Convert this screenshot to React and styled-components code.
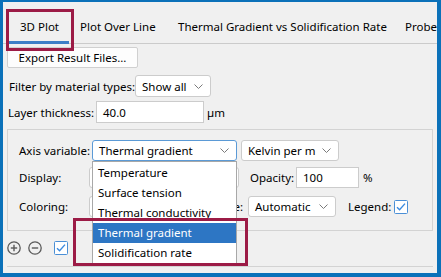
import React from "react";
import styled, { createGlobalStyle } from "styled-components";

const BLUE_FRAME = "#0b71b9";
const ACCENT = "#3c7ec6";
const MARK = "#9c1b46";

const GlobalStyle = createGlobalStyle`
    html, body {
        margin: 0;
        padding: 0;
        background: #f0f0f0;
    }
    body {
        font-family: "Noto Sans", "Segoe UI", sans-serif;
        font-size: 11.5px;
        color: #000;
    }
`

const Frame = styled.div`
    position: relative;
    width: 441px;
    height: 277px;
    box-sizing: border-box;
    border-style: solid;
    border-color: ${BLUE_FRAME};
    border-width: 2px 4px 4px 3px;
    background: #f0f0f0;
    overflow: hidden;
    display: flex;
    flex-direction: column;
`

const TabBar = styled.div`
    display: flex;
    align-items: flex-end;
    height: 41px;
    padding-left: 6px;
    border-bottom: 1px solid #cbcbcb;
    white-space: nowrap;
    flex-shrink: 0;
`

const Tab = styled.div`
    width: ${p => (p.$w ? `${p.$w}px` : "auto")};
    padding-left: 11px;
    height: 25px;
    line-height: 16px;
    box-sizing: border-box;
    border-bottom: 3px solid ${p => (p.$active ? ACCENT : "transparent")};
    margin-bottom: -1px;
    flex-shrink: 0;
`

const Content = styled.div`
    display: flex;
    flex-direction: column;
    padding: 3px 4px 0 4px;
`

const Button = styled.div`
    width: 131px;
    height: 21px;
    box-sizing: border-box;
    border: 1px solid #d0d0d0;
    border-radius: 2px;
    background: #fdfdfd;
    display: flex;
    align-items: center;
    justify-content: center;
`

const Row = styled.div`
    display: flex;
    align-items: center;
    height: ${p => p.$h || 22}px;
    margin-top: ${p => p.$top || 0}px;
    padding-left: ${p => p.$indent || 0}px;
    white-space: nowrap;
`

const Label = styled.span`
    width: ${p => (p.$w ? `${p.$w}px` : "auto")};
    margin-left: ${p => p.$ml || 0}px;
    display: flex;
    justify-content: ${p => (p.$right ? "flex-end" : "flex-start")};
    flex-shrink: 0;
`

const Select = styled.div`
    width: ${p => p.$w}px;
    height: ${p => p.$h || 22}px;
    box-sizing: border-box;
    margin-left: ${p => p.$ml || 0}px;
    border: 1px solid ${p => (p.$focus ? "#5b9ad6" : "#cccccc")};
    border-radius: 3px;
    background: #fff;
    display: flex;
    align-items: center;
    justify-content: space-between;
    padding: 0 7px 0 6px;
    flex-shrink: 0;
`

const Input = styled.div`
    width: ${p => p.$w}px;
    height: ${p => p.$h || 22}px;
    box-sizing: border-box;
    margin-left: ${p => p.$ml || 0}px;
    border: 1px solid #cccccc;
    background: #fff;
    display: flex;
    align-items: center;
    padding-left: 6px;
    flex-shrink: 0;
`

const GroupBox = styled.div`
    margin-top: 6px;
    height: 102px;
    box-sizing: border-box;
    border: 1px solid #d3d3d3;
    padding-top: 10px;
    display: flex;
    flex-direction: column;
`

const Toolbar = styled.div`
    display: flex;
    align-items: center;
    gap: 7px;
    height: 23px;
    margin-top: 5px;
`

const BottomPanel = styled.div`
    margin-top: 7px;
    flex: 1;
    border: 1px solid #d3d3d3;
    border-bottom: none;
`

const DropList = styled.div`
    position: absolute;
    left: 89px;
    top: 159px;
    width: 145px;
    height: 103px;
    box-sizing: border-box;
    border: 1px solid #a8a8a8;
    background: #fff;
    padding-top: 1px;
    z-index: 2;
`

const Option = styled.div`
    height: 20px;
    line-height: 20px;
    padding-left: 5px;
    background: ${p => (p.$selected ? "#2d76c4" : "transparent")};
    color: ${p => (p.$selected ? "#fff" : "#000")};
    white-space: nowrap;
`

const Highlight = styled.div`
    position: absolute;
    left: ${p => p.$x}px;
    top: ${p => p.$y}px;
    width: ${p => p.$w}px;
    height: ${p => p.$h}px;
    box-sizing: border-box;
    border: 3px solid ${MARK};
    z-index: 3;
`

const Chevron = () => (
    <svg width="9" height="5" viewBox="0 0 9 5">
        <path d="M0.5 0.5 L4.5 4.5 L8.5 0.5" fill="none" stroke="#7a7a7a" strokeWidth="1" />
    </svg>
)

const CheckBox = () => (
    <svg width="14" height="14" viewBox="0 0 14 14">
        <rect x="0.5" y="0.5" width="13" height="13" rx="1" fill="#fff" stroke="#4a8fd6" />
        <path d="M3 7.2 L5.6 9.8 L11 3.6" fill="none" stroke="#3b8be0" strokeWidth="1.4" />
    </svg>
)

const CircleIcon = ({ plus }) => (
    <svg width="14" height="14" viewBox="0 0 14 14">
        <circle cx="7" cy="7" r="6.2" fill="none" stroke="#5a5a5a" strokeWidth="1.3" />
        <path d="M3.8 7 H10.2" stroke="#5a5a5a" strokeWidth="1.4" />
        {plus && <path d="M7 3.8 V10.2" stroke="#5a5a5a" strokeWidth="1.4" />}
    </svg>
)

const tabs = [
    { name: "3D Plot", w: 60 },
    { name: "Plot Over Line", w: 98 },
    { name: "Thermal Gradient vs Solidification Rate", w: 227 },
    { name: "Probe" },
]
const options = ["Temperature", "Surface tension", "Thermal conductivity", "Thermal gradient", "Solidification rate"]

const App = () => {
    return (
        <>
            <GlobalStyle />
            <Frame>
                <TabBar>
                    {tabs.map((t, i) => (
                        <Tab key={t.name} $w={t.w} $active={i === 0}>{t.name}</Tab>
                    ))}
                </TabBar>
                <Content>
                    <Button>Export Result Files...</Button>
                    <Row $top={7} $indent={2}>
                        <Label $w={126}>Filter by material types:</Label>
                        <Select $w={76}>Show all <Chevron /></Select>
                    </Row>
                    <Row $top={4} $indent={1}>
                        <Label $w={88}>Layer thickness:</Label>
                        <Input $w={108}>40.0</Input>
                        <Label $ml={3}>µm</Label>
                    </Row>
                    <GroupBox>
                        <Row $indent={11} $h={21}>
                            <Label $w={73}>Axis variable:</Label>
                            <Select $w={145} $h={21} $focus>Thermal gradient <Chevron /></Select>
                            <Select $w={98} $h={21} $ml={4}>Kelvin per m <Chevron /></Select>
                        </Row>
                        <Row $indent={11} $top={6} $h={21}>
                            <Label $w={70}>Display:</Label>
                            <Select $w={150} $h={21} />
                            <Label $w={46} $ml={11}>Opacity:</Label>
                            <Input $w={63} $h={21}>100</Input>
                            <Label $ml={4}>%</Label>
                        </Row>
                        <Row $indent={11} $top={8} $h={21}>
                            <Label $w={70}>Coloring:</Label>
                            <Select $w={82} $h={21} />
                            <Label $w={72} $right>Range:</Label>
                            <Select $w={88} $h={21} $ml={5}>Automatic <Chevron /></Select>
                            <Label $w={46} $ml={12}>Legend:</Label>
                            <CheckBox />
                        </Row>
                    </GroupBox>
                    <Toolbar>
                        <CircleIcon plus />
                        <CircleIcon />
                        <Label $ml={5}><CheckBox /></Label>
                    </Toolbar>
                    <BottomPanel />
                </Content>
                <DropList>
                    {options.map(o => (
                        <Option key={o} $selected={o === "Thermal gradient"}>{o}</Option>
                    ))}
                </DropList>
                <Highlight $x={3} $y={7} $w={68} $h={42} />
                <Highlight $x={70} $y={216} $w={175} $h={48} />
            </Frame>
        </>
    )
}

export default App;
